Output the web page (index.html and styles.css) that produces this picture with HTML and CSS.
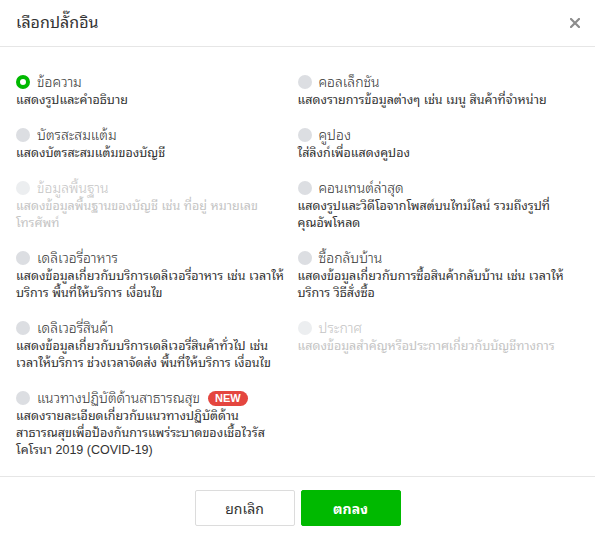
FILE: index.html
```html
<!DOCTYPE html>
<html lang="th">
<head>
<meta charset="utf-8">
<link rel="stylesheet" href="styles.css">
</head>
<body>
<div class="modal">
  <div class="header">
    <h1 class="title">เลือกปลั๊กอิน</h1>
    <span class="close">
      <svg width="10" height="10" viewBox="0 0 10 10"><path d="M1 1L9 9M9 1L1 9" stroke="#8c8c8c" stroke-width="2.2" stroke-linecap="square"/></svg>
    </span>
  </div>
  <div class="body">
    <div class="item">
      <div class="row"><span class="radio checked"></span><span class="name">ข้อความ</span></div>
      <p class="desc">แสดงรูปและคำอธิบาย</p>
    </div>
    <div class="item">
      <div class="row"><span class="radio"></span><span class="name">คอลเล็กชัน</span></div>
      <p class="desc">แสดงรายการข้อมูลต่างๆ เช่น เมนู สินค้าที่จำหน่าย</p>
    </div>
    <div class="item">
      <div class="row"><span class="radio"></span><span class="name">บัตรสะสมแต้ม</span></div>
      <p class="desc">แสดงบัตรสะสมแต้มของบัญชี</p>
    </div>
    <div class="item">
      <div class="row"><span class="radio"></span><span class="name">คูปอง</span></div>
      <p class="desc">ใส่ลิงก์เพื่อแสดงคูปอง</p>
    </div>
    <div class="item disabled">
      <div class="row"><span class="radio"></span><span class="name">ข้อมูลพื้นฐาน</span></div>
      <p class="desc">แสดงข้อมูลพื้นฐานของบัญชี เช่น ที่อยู่ หมายเลขโทรศัพท์</p>
    </div>
    <div class="item">
      <div class="row"><span class="radio"></span><span class="name">คอนเทนต์ล่าสุด</span></div>
      <p class="desc">แสดงรูปและวิดีโอจากโพสต์บนไทม์ไลน์ รวมถึงรูปที่<span class="nowrap">คุณอัพโหลด</span></p>
    </div>
    <div class="item">
      <div class="row"><span class="radio"></span><span class="name">เดลิเวอรี่อาหาร</span></div>
      <p class="desc">แสดงข้อมูลเกี่ยวกับบริการเดลิเวอรี่อาหาร เช่น เวลาให้บริการ พื้นที่ให้บริการ เงื่อนไข</p>
    </div>
    <div class="item">
      <div class="row"><span class="radio"></span><span class="name">ซื้อกลับบ้าน</span></div>
      <p class="desc">แสดงข้อมูลเกี่ยวกับการซื้อสินค้ากลับบ้าน เช่น เวลาให้บริการ วิธีสั่งซื้อ</p>
    </div>
    <div class="item">
      <div class="row"><span class="radio"></span><span class="name">เดลิเวอรี่สินค้า</span></div>
      <p class="desc">แสดงข้อมูลเกี่ยวกับบริการเดลิเวอรี่สินค้าทั่วไป เช่น เวลาให้บริการ ช่วงเวลาจัดส่ง พื้นที่ให้บริการ เงื่อนไข</p>
    </div>
    <div class="item disabled">
      <div class="row"><span class="radio"></span><span class="name">ประกาศ</span></div>
      <p class="desc">แสดงข้อมูลสำคัญหรือประกาศเกี่ยวกับบัญชีทางการ</p>
    </div>
    <div class="item">
      <div class="row"><span class="radio"></span><span class="name">แนวทางปฏิบัติด้านสาธารณสุข</span><span class="badge">NEW</span></div>
      <p class="desc">แสดงรายละเอียดเกี่ยวกับแนวทางปฏิบัติด้านสาธารณสุขเพื่อป้องกันการแพร่ระบาดของเชื้อไวรัสโคโรนา 2019 (COVID-19)</p>
    </div>
  </div>
  <div class="footer">
    <button class="btn btn-cancel">ยกเลิก</button>
    <button class="btn btn-ok">ตกลง</button>
  </div>
</div>
</body>
</html>
```
FILE: styles.css
```css
* { box-sizing: border-box; }
html, body { margin: 0; padding: 0; background: #fff; }
body {
  font-family: "Liberation Sans", "Noto Sans Thai Looped", sans-serif;
  color: #333;
}
.modal { width: 595px; height: 538px; display: flex; flex-direction: column; }
.header {
  height: 47px;
  display: flex;
  align-items: center;
  justify-content: space-between;
  padding: 0 16px;
  border-bottom: 1px solid #e6e6e6;
}
.title { margin: 0; font-size: 16px; font-weight: 400; color: #333; line-height: 20px; }
.close { display: flex; width: 10px; height: 10px; margin-right: -1px; }
.body {
  display: grid;
  grid-template-columns: 1fr 1fr;
  padding: 25px 16px 0 16px;
  height: 430px;
  align-content: start;
  border-bottom: 1px solid #e6e6e6;
}
.item { margin-bottom: 16px; padding-right: 6px; }
.row { display: flex; align-items: center; height: 20px; }
.radio {
  width: 14px; height: 14px; border-radius: 50%;
  background: #dcdee2; margin-right: 7px; flex: none;
}
.radio.checked { background: #fff; border: 4px solid #00b900; }
.name { font-size: 14px; line-height: 20px; color: #333; font-weight: 360; }
.desc { margin: 0; font-size: 12.5px; line-height: 17px; color: #333; font-weight: 370; }
.nowrap { white-space: nowrap; }
.disabled .name, .disabled .desc { color: #c4c4c4; }
.disabled .radio { background: #eceef0; }
.badge {
  margin-left: 8px;
  background: #e4463f;
  color: #fff;
  font-family: "Liberation Sans", Arial, sans-serif;
  font-weight: 700;
  font-size: 11px;
  line-height: 15px;
  height: 15px;
  padding: 0 7px;
  border-radius: 8px;
}
.footer {
  flex: 1;
  display: flex;
  justify-content: center;
  align-items: center;
  gap: 6px;
}
.btn {
  width: 100px; height: 36px;
  font-family: inherit;
  font-size: 14px;
  border-radius: 2px;
  cursor: pointer;
}
.btn-cancel { background: #fff; border: 1px solid #dcdcdc; color: #333; }
.btn-ok { background: #00b900; border: 1px solid #00b900; color: #fff; font-weight: 700; }
```
